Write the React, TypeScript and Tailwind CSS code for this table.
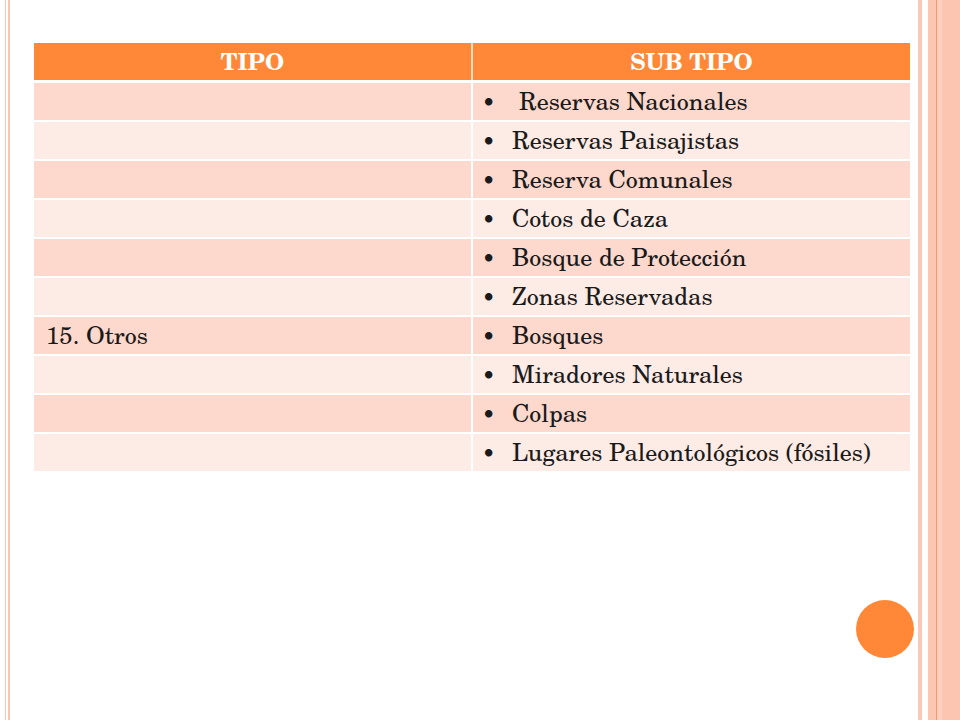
import React from "react";

const rows: { left: string; right: string; extra?: boolean }[] = [
  { left: "", right: "Reservas Nacionales", extra: true },
  { left: "", right: "Reservas Paisajistas" },
  { left: "", right: "Reserva Comunales" },
  { left: "", right: "Cotos de Caza" },
  { left: "", right: "Bosque de Protección" },
  { left: "", right: "Zonas Reservadas" },
  { left: "15. Otros", right: "Bosques" },
  { left: "", right: "Miradores Naturales" },
  { left: "", right: "Colpas" },
  { left: "", right: "Lugares Paleontológicos (fósiles)" },
];

export default function App() {
  return (
    <div
      className="relative flex w-[960px] h-[720px] overflow-hidden bg-white"
      style={{ fontFamily: '"TeX Gyre Schola", "Liberation Serif", serif' }}
    >
      {/* left frame lines */}
      <div className="w-[5px] shrink-0" />
      <div className="w-[1px] shrink-0 bg-[#f9c6b4]" />
      <div className="w-[2px] shrink-0" />
      <div className="w-[2px] shrink-0 bg-[#f9c6b4]" />

      {/* content */}
      <div className="flex-1 pl-[24px] pt-[43px]">
        <div className="flex flex-col w-[876px]">
          <div className="flex h-[37px] bg-[#ff8838] text-white font-bold text-[23px] leading-none">
            <div className="w-[437px] flex items-center justify-center">TIPO</div>
            <div className="w-[2px] bg-white/70" />
            <div className="flex-1 flex items-center justify-center">SUB TIPO</div>
          </div>
          <div className="h-[3px]" />
          <div className="flex flex-col gap-[2px]">
            {rows.map((r, i) => (
              <div
                key={i}
                className={`flex h-[37px] text-[24px] leading-none text-[#1a1a1a] ${
                  i % 2 === 0 ? "bg-[#fdd8cd]" : "bg-[#fdebe5]"
                }`}
              >
                <div className="w-[437px] flex items-center pl-[12px] pb-[1px]">{r.left}</div>
                <div className="w-[2px] bg-white" />
                <div className="flex-1 flex items-center pl-[9px] pb-[1px]">
                  <span className="w-[30px] shrink-0 text-[22px]">•</span>
                  <span className={r.extra ? "pl-[7px]" : ""}>{r.right}</span>
                </div>
              </div>
            ))}
          </div>
        </div>
      </div>

      {/* right frame stripes */}
      <div className="flex shrink-0 w-[42px] h-full">
        <div className="w-[4px] bg-[#f9c8b6]" />
        <div className="w-[6px] bg-white" />
        <div className="w-[8px] bg-[#fbc6b2]" />
        <div className="w-[1px] bg-[#ee9a6a]" />
        <div className="w-[5px] bg-[#fccfbe]" />
        <div className="flex-1 bg-[#fcc5b1]" />
      </div>

      {/* decorative circle */}
      <div className="absolute left-[856px] top-[600px] w-[58px] h-[58px] rounded-full bg-[#ff8838]" />
    </div>
  );
}
